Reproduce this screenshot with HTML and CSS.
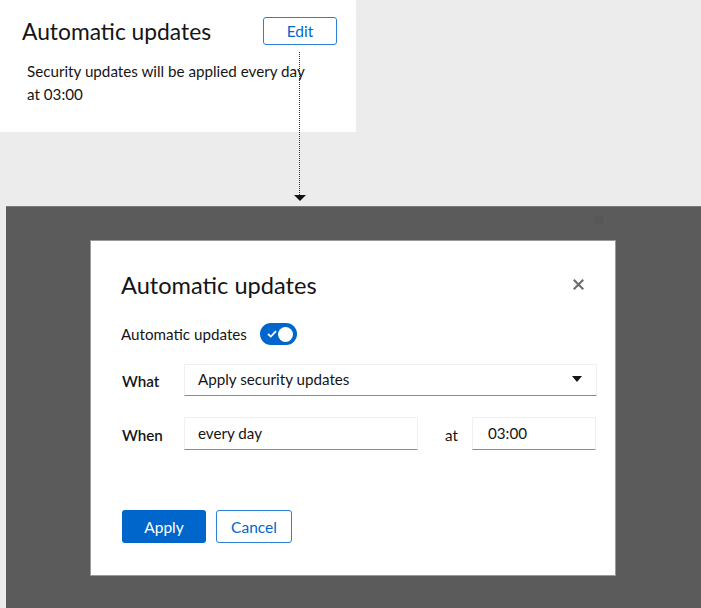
FILE: index.html
```html
<!DOCTYPE html>
<html lang="en">
<head>
    <meta charset="UTF-8">
    <meta name="viewport" content="width=device-width, initial-scale=1.0">
    <title>Automatic updates</title>
    <link rel="stylesheet" href="styles.css">
</head>
<body>
    <div class="card">
        <div class="card-header">
            <h2 class="card-title">Automatic updates</h2>
            <button class="btn-secondary btn-edit">Edit</button>
        </div>
        <p class="card-text">Security updates will be applied every day<br>at 03:00</p>
        <div class="connector"></div>
        <div class="connector-arrow"></div>
    </div>

    <div class="overlay">
        <span class="ghost-close">&#x22A0;</span>
        <div class="modal">
            <div class="modal-header">
                <h2 class="modal-title">Automatic updates</h2>
                <svg class="close-icon" width="11" height="11" viewBox="0 0 11 11">
                    <path d="M1.5 1.5 L9.5 9.5 M9.5 1.5 L1.5 9.5" stroke="#6a6e73" stroke-width="2.2" stroke-linecap="square"/>
                </svg>
            </div>
            <div class="switch-row">
                <span>Automatic updates</span>
                <span class="switch">
                    <svg class="switch-check" width="10" height="8" viewBox="0 0 10 8">
                        <path d="M1 4 L3.8 6.6 L9 1.2" fill="none" stroke="#fff" stroke-width="1.8"/>
                    </svg>
                    <span class="switch-knob"></span>
                </span>
            </div>
            <div class="form">
                <label class="form-label">What</label>
                <div class="select">
                    <span>Apply security updates</span>
                    <span class="caret"></span>
                </div>
                <label class="form-label">When</label>
                <div class="when-row">
                    <div class="input input-day">every day</div>
                    <span class="at">at</span>
                    <div class="input input-time">03:00</div>
                </div>
            </div>
            <div class="modal-footer">
                <button class="btn-primary">Apply</button>
                <button class="btn-secondary btn-cancel">Cancel</button>
            </div>
        </div>
    </div>
</body>
</html>
```

FILE: styles.css
```css
body {
    margin: 0;
    width: 701px;
    height: 608px;
    overflow: hidden;
    background-color: #ececec;
    font-family: Lato, "Liberation Sans", sans-serif;
    color: #151515;
}
button {
    font-family: inherit;
    cursor: pointer;
}
.card {
    position: relative;
    width: 356px;
    height: 132px;
    background-color: #fff;
}
.card-header {
    display: flex;
    justify-content: space-between;
    align-items: center;
    padding: 17px 19px 0 22px;
}
.card-title {
    margin: 0;
    font-size: 22.8px;
    font-weight: 400;
    line-height: 28px;
}
.btn-secondary {
    background-color: #fff;
    color: #0066cc;
    border: 1px solid #2b7fd6;
    border-radius: 3px;
    font-size: 15.5px;
}
.btn-edit {
    width: 74px;
    height: 28px;
    padding: 0;
}
.card-text {
    margin: 15px 0 0 27px;
    font-size: 15.2px;
    line-height: 23px;
}
.connector {
    position: absolute;
    left: 299px;
    top: 52px;
    height: 143px;
    border-left: 1px dotted #333;
}
.connector-arrow {
    position: absolute;
    left: 294px;
    top: 195px;
    width: 0;
    height: 0;
    border-left: 6px solid transparent;
    border-right: 6px solid transparent;
    border-top: 6px solid #111;
}
.overlay {
    position: relative;
    box-sizing: border-box;
    margin: 74px 0 0 6px;
    height: 402px;
    background-color: #5b5b5b;
    border-top: 1px solid #777;
    padding-top: 33px;
}
.ghost-close {
    position: absolute;
    left: 588px;
    top: 5px;
    font-size: 12px;
    color: #555;
}
.modal {
    box-sizing: border-box;
    margin-left: 84px;
    width: 526px;
    height: 336px;
    background-color: #fff;
    border: 1px solid #999;
    padding: 30px 18px 0 30px;
}
.modal-header {
    display: flex;
    justify-content: space-between;
    align-items: center;
    padding-right: 13px;
}
.modal-title {
    margin: 0;
    font-size: 23.6px;
    font-weight: 400;
    line-height: 28px;
}
.close-icon {
    margin-top: -2px;
}
.switch-row {
    display: flex;
    align-items: center;
    gap: 13px;
    margin-top: 23px;
    height: 24px;
    font-size: 15.2px;
}
.switch {
    position: relative;
    display: flex;
    align-items: center;
    box-sizing: border-box;
    width: 37px;
    height: 22px;
    padding: 0 4px 0 7px;
    justify-content: space-between;
    background-color: #0066cc;
    border-radius: 11px;
}
.switch-knob {
    width: 15px;
    height: 15px;
    border-radius: 50%;
    background-color: #fff;
}
.form {
    display: grid;
    grid-template-columns: 63px 1fr;
    align-items: center;
    row-gap: 21px;
    margin-top: 18px;
    font-size: 15.2px;
}
.form-label {
    font-weight: 600;
    padding-left: 1px;
    padding-top: 2px;
}
.select,
.input {
    box-sizing: border-box;
    display: flex;
    align-items: center;
    height: 33px;
    border: 1px solid #f0f0f0;
    border-bottom-color: #8a8d90;
    padding: 0 13px 2px 13px;
}
.select {
    justify-content: space-between;
    height: 32px;
}
.caret {
    width: 0;
    height: 0;
    border-left: 5px solid transparent;
    border-right: 5px solid transparent;
    border-top: 6px solid #151515;
    margin-right: 1px;
}
.when-row {
    display: flex;
    align-items: center;
}
.input-day {
    width: 234px;
}
.at {
    width: 54px;
    padding-left: 27px;
    box-sizing: border-box;
    padding-top: 3px;
}
.input-time {
    width: 124px;
    padding-left: 15px;
}
.modal-footer {
    display: flex;
    gap: 10px;
    margin-top: 60px;
    padding-left: 1px;
}
.modal-footer button {
    height: 33px;
    font-size: 15.5px;
    padding: 0;
}
.btn-primary {
    width: 84px;
    background-color: #0066cc;
    color: #fff;
    border: none;
    border-radius: 3px;
}
.btn-cancel {
    width: 76px;
}
```
